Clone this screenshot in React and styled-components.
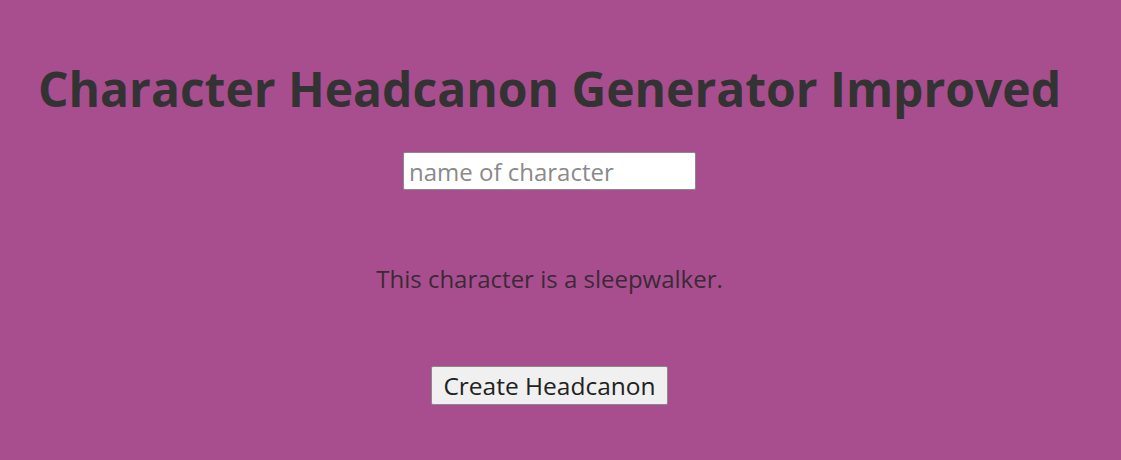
import React, { useState } from 'react';
import styled, { createGlobalStyle } from 'styled-components';

const GlobalStyle = createGlobalStyle`
    html, body {
        margin: 0;
        padding: 0;
        background: #a84e8f;
    }
    body {
        font-family: "Open Sans", "Noto Sans", sans-serif;
        color: #333333;
    }
`;

const Main = styled.main`
    min-height: 460px;
    display: flex;
    flex-direction: column;
    align-items: center;
    padding: 55px 22px 0 0;
    box-sizing: border-box;
`;

const Title = styled.h1`
    margin: 0;
    font-size: 48px;
    font-weight: 700;
    color: #333333;
    line-height: 1.4;
`;

const NameInput = styled.input`
    margin-top: 30px;
    width: 293px;
    height: 38px;
    box-sizing: border-box;
    padding: 0 5px;
    font-family: inherit;
    font-size: 24px;
    color: #333333;
    background: #ffffff;
    border: 1px solid #8a8a8a;
    border-radius: 2px;
    outline: none;
    &::placeholder {
        color: #8a8a8a;
    }
`;

const Result = styled.p`
    margin: 73px 0 0;
    font-size: 24px;
    color: #3a2a36;
    line-height: 1.3;
`;

const Button = styled.button`
    margin-top: 72px;
    height: 39px;
    padding: 0 11px;
    font-family: inherit;
    font-size: 24.5px;
    color: #222222;
    background: #f0f0f0;
    border: 1px solid #8a8a8a;
    border-radius: 2px;
    cursor: pointer;
`;

const headcanons = [
    'is a sleepwalker.',
    'secretly loves romance novels.',
    'is afraid of the dark.',
    'hums when nervous.',
];

export default function App() {
    const [name, setName] = useState('');
    const [idx, setIdx] = useState(0);

    const who = name.trim() ? name.trim() : 'This character';

    return (
        <>
            <GlobalStyle />
            <Main>
                <Title>Character Headcanon Generator Improved</Title>
                <NameInput
                    placeholder="name of character"
                    value={name}
                    onChange={(e) => setName(e.target.value)}
                />
                <Result>{who} {headcanons[idx]}</Result>
                <Button onClick={() => setIdx((idx + 1) % headcanons.length)}>
                    Create Headcanon
                </Button>
            </Main>
        </>
    );
}
